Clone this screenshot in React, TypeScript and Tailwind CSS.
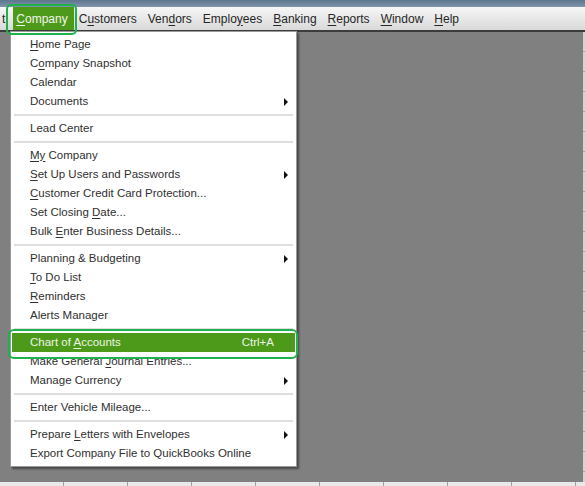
import type { ReactNode } from 'react';

type MenuEntry =
  | { kind: 'item'; label: ReactNode; submenu?: boolean; shortcut?: string; active?: boolean }
  | { kind: 'sep' };

// underline the access-key letter
const k = (before: string, key: string, after: string) => (
  <>
    {before}
    <u className="underline-offset-[2px]">{key}</u>
    {after}
  </>
);

const topMenus: ReactNode[] = [
  k('C', 'u', 'stomers'),
  k('Ven', 'd', 'ors'),
  k('Emplo', 'y', 'ees'),
  k('', 'B', 'anking'),
  k('', 'R', 'eports'),
  k('', 'W', 'indow'),
  k('', 'H', 'elp'),
];

const entries: MenuEntry[] = [
  { kind: 'item', label: k('', 'H', 'ome Page') },
  { kind: 'item', label: k('C', 'o', 'mpany Snapshot') },
  { kind: 'item', label: 'Calendar' },
  { kind: 'item', label: 'Documents', submenu: true },
  { kind: 'sep' },
  { kind: 'item', label: 'Lead Center' },
  { kind: 'sep' },
  { kind: 'item', label: k('', 'My', ' Company') },
  { kind: 'item', label: k('', 'S', 'et Up Users and Passwords'), submenu: true },
  { kind: 'item', label: k('', 'C', 'ustomer Credit Card Protection...') },
  { kind: 'item', label: k('Set Closing ', 'D', 'ate...') },
  { kind: 'item', label: k('Bulk ', 'E', 'nter Business Details...') },
  { kind: 'sep' },
  { kind: 'item', label: k('Plannin', 'g', ' & Budgeting'), submenu: true },
  { kind: 'item', label: k('', 'T', 'o Do List') },
  { kind: 'item', label: k('', 'R', 'eminders') },
  { kind: 'item', label: 'Alerts Manager' },
  { kind: 'sep' },
  { kind: 'item', label: k('Chart of ', 'A', 'ccounts'), shortcut: 'Ctrl+A', active: true },
  { kind: 'item', label: k('Make General ', 'J', 'ournal Entries...') },
  { kind: 'item', label: 'Manage Currency', submenu: true },
  { kind: 'sep' },
  { kind: 'item', label: 'Enter Vehicle Mileage...' },
  { kind: 'sep' },
  { kind: 'item', label: k('Prepare ', 'L', 'etters with Envelopes'), submenu: true },
  { kind: 'item', label: 'Export Company File to QuickBooks Online' },
];

function Arrow() {
  return <span className="w-0 h-0 border-y-[4px] border-y-transparent border-l-[4px] border-l-[#111]" />;
}

export default function App() {
  return (
    <div className="relative w-[585px] h-[486px] overflow-hidden bg-[#808080] text-[12px] leading-none text-[#262626] font-['Liberation_Sans',Arial,sans-serif]">
      {/* window title edge */}
      <div className="h-[7px] bg-linear-to-b from-[#5d768e] to-[#7f95aa]" />

      {/* menu bar */}
      <nav className="h-[25px] flex items-stretch gap-[11px] pl-[2px] bg-linear-to-b from-[#f7f7f7] to-[#d9d9d9] border-b-2 border-[#3c3c3c]">
        <span className="flex items-center">t</span>
        <span className="flex items-center -ml-[3px] pl-[3px] pr-[6px] -mr-[6px] bg-[#4d9a1b] text-[#f2f6ea]">
          {k('', 'C', 'ompany')}
        </span>
        {topMenus.map((m, i) => (
          <span key={i} className="flex items-center">
            {m}
          </span>
        ))}
      </nav>

      {/* workspace */}
      <div className="flex h-[450px]">
        <div className="flex-1" />
        <div className="w-[2px] flex flex-col bg-[#d4d4d4]">
          {Array.from({ length: 23 }).map((_, i) => (
            <div key={i} className="h-[20px] shrink-0 border-b border-[#a8a8a8]" />
          ))}
        </div>
      </div>
      <div className="h-[4px] flex bg-[#e9e9e9]">
        {Array.from({ length: 10 }).map((_, i) => (
          <div key={i} className="w-[64px] shrink-0 border-r border-[#a0a0a0]" />
        ))}
      </div>

      {/* Company dropdown */}
      <div className="absolute left-[10px] top-[31px] w-[287px] bg-white border border-[#9a9a9a] py-[3px] text-[11.5px] text-[#303030] shadow-[2px_2px_2px_rgba(0,0,0,0.45)]">
        {entries.map((e, i) =>
          e.kind === 'sep' ? (
            <div key={i} className="h-[8px] flex items-center px-[3px]">
              <div className="h-[2px] flex-1 bg-[#dedede]" />
            </div>
          ) : (
            <div
              key={i}
              className={
                e.active
                  ? 'h-[19px] mx-[1px] flex items-center pl-[18px] pr-[21px] bg-[#4d9a1b] text-[#eef5e4]'
                  : 'h-[19px] flex items-center pl-[19px] pr-[8px]'
              }
            >
              <span className="flex-1 whitespace-nowrap">{e.label}</span>
              {e.shortcut && <span>{e.shortcut}</span>}
              {e.submenu && <Arrow />}
            </div>
          )
        )}
      </div>

      {/* green call-out frames */}
      <div className="absolute left-[6px] top-[4px] w-[71px] h-[31px] border-2 border-[#1fb14b] rounded-[5px]" />
      <div className="absolute left-[8px] top-[329px] w-[290px] h-[30px] border-2 border-[#1fb14b] rounded-[6px]" />
    </div>
  );
}
